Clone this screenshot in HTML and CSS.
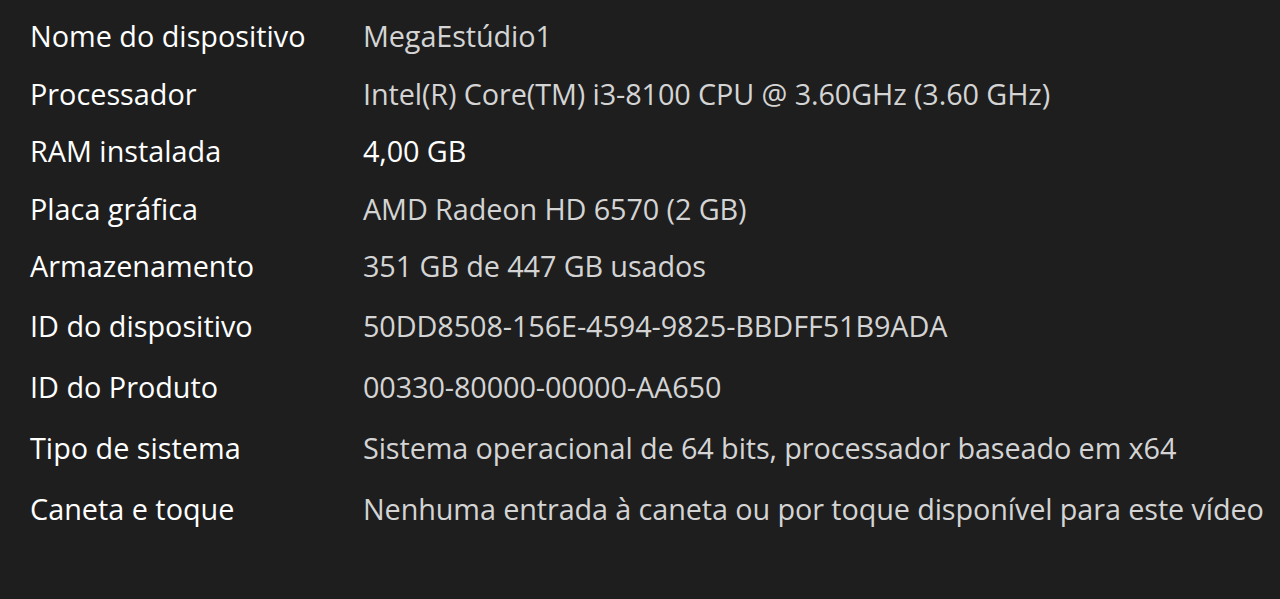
FILE: index.html
```html
<!DOCTYPE html>
<html lang="pt-BR">
<head>
  <meta charset="UTF-8">
  <title>Especificações do dispositivo</title>
  <link rel="stylesheet" href="styles.css">
</head>
<body>
  <!-- Device specifications -->
  <dl class="specs">
    <div class="spec-row"><dt>Nome do dispositivo</dt><dd>MegaEstúdio1</dd></div>
    <div class="spec-row"><dt>Processador</dt><dd>Intel(R) Core(TM) i3-8100 CPU @ 3.60GHz (3.60 GHz)</dd></div>
    <div class="spec-row"><dt>RAM instalada</dt><dd class="highlight">4,00 GB</dd></div>
    <div class="spec-row"><dt>Placa gráfica</dt><dd>AMD Radeon HD 6570 (2 GB)</dd></div>
    <div class="spec-row"><dt>Armazenamento</dt><dd>351 GB de 447 GB usados</dd></div>
    <div class="spec-row wide"><dt>ID do dispositivo</dt><dd>50DD8508-156E-4594-9825-BBDFF51B9ADA</dd></div>
    <div class="spec-row wide"><dt>ID do Produto</dt><dd>00330-80000-00000-AA650</dd></div>
    <div class="spec-row wide"><dt>Tipo de sistema</dt><dd>Sistema operacional de 64 bits, processador baseado em x64</dd></div>
    <div class="spec-row wide"><dt>Caneta e toque</dt><dd>Nenhuma entrada à caneta ou por toque disponível para este vídeo</dd></div>
  </dl>
</body>
</html>
```

FILE: styles.css
```css
/* General Styles */
html, body {
  height: 100%;
}

body {
  font-family: 'Open Sans', 'Noto Sans', sans-serif;
  margin: 0;
  padding: 0;
  background: #1e1e1e;
  color: #fff;
}

.specs {
  margin: 0;
  padding: 7px 0 0 30px;
}

.spec-row {
  display: grid;
  grid-template-columns: 333px 1fr;
  height: 57.5px;
  line-height: 57.5px;
  font-size: 28.8px;
  white-space: nowrap;
}

.spec-row.wide {
  height: 61px;
  line-height: 61px;
}

dt {
  color: #fff;
}

dd {
  margin: 0;
  color: #d4d4d4;
  letter-spacing: -0.1px;
}

dd.highlight {
  color: #fff;
}
```
